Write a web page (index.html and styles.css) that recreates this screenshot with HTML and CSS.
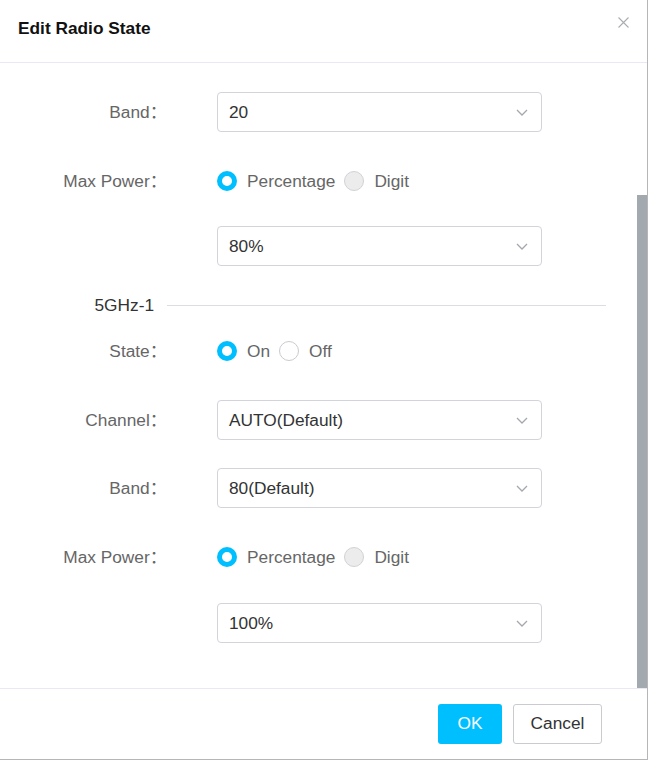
FILE: index.html
```html
<!DOCTYPE html>
<html>
<head>
<meta charset="utf-8">
<link rel="stylesheet" href="styles.css">
</head>
<body>
<div class="dialog">
  <div class="header">
    <div class="title">Edit Radio State</div>
    <svg class="close" width="11" height="11" viewBox="0 0 11 11"><path d="M0.5 0.5 L10.5 10.5 M10.5 0.5 L0.5 10.5" stroke="#a9adb3" stroke-width="1.1" fill="none"/></svg>
  </div>
  <div class="body">
    <div class="row first">
      <div class="label">Band：</div>
      <div class="select"><span>20</span><svg class="chev" width="12" height="7" viewBox="0 0 12 7"><path d="M1 1 L6 6 L11 1" stroke="#a4a7ad" stroke-width="1.3" fill="none"/></svg></div>
    </div>
    <div class="row gap29">
      <div class="label">Max Power：</div>
      <div class="radios">
        <span class="opt"><span class="radio on"></span>Percentage</span>
        <span class="opt"><span class="radio off gray"></span>Digit</span>
      </div>
    </div>
    <div class="row gap25">
      <div class="label"></div>
      <div class="select"><span>80%</span><svg class="chev" width="12" height="7" viewBox="0 0 12 7"><path d="M1 1 L6 6 L11 1" stroke="#a4a7ad" stroke-width="1.3" fill="none"/></svg></div>
    </div>
    <div class="section">
      <div class="sec-title">5GHz-1</div>
      <div class="sec-line"></div>
    </div>
    <div class="row gap16">
      <div class="label">State：</div>
      <div class="radios">
        <span class="opt"><span class="radio on"></span>On</span>
        <span class="opt"><span class="radio off"></span>Off</span>
      </div>
    </div>
    <div class="row gap29">
      <div class="label">Channel：</div>
      <div class="select"><span>AUTO(Default)</span><svg class="chev" width="12" height="7" viewBox="0 0 12 7"><path d="M1 1 L6 6 L11 1" stroke="#a4a7ad" stroke-width="1.3" fill="none"/></svg></div>
    </div>
    <div class="row gap28">
      <div class="label">Band：</div>
      <div class="select"><span>80(Default)</span><svg class="chev" width="12" height="7" viewBox="0 0 12 7"><path d="M1 1 L6 6 L11 1" stroke="#a4a7ad" stroke-width="1.3" fill="none"/></svg></div>
    </div>
    <div class="row gap29">
      <div class="label">Max Power：</div>
      <div class="radios">
        <span class="opt"><span class="radio on"></span>Percentage</span>
        <span class="opt"><span class="radio off gray"></span>Digit</span>
      </div>
    </div>
    <div class="row gap26">
      <div class="label"></div>
      <div class="select"><span>100%</span><svg class="chev" width="12" height="7" viewBox="0 0 12 7"><path d="M1 1 L6 6 L11 1" stroke="#a4a7ad" stroke-width="1.3" fill="none"/></svg></div>
    </div>
    <div class="thumb"></div>
  </div>
  <div class="footer">
    <button class="btn ok">OK</button>
    <button class="btn cancel">Cancel</button>
  </div>
</div>
</body>
</html>
```

FILE: styles.css
```css
html, body {
  margin: 0;
  padding: 0;
  background: #ffffff;
}
body {
  font-family: "Liberation Sans", Arial, "Noto Sans CJK SC", sans-serif;
  font-size: 17.3px;
  line-height: 20px;
  color: #666;
}
.dialog {
  width: 647px;
  height: 759px;
  border-right: 1px solid #b4b6b9;
  border-bottom: 1px solid #b4b6b9;
  display: flex;
  flex-direction: column;
  background: #fff;
}
.header {
  height: 62px;
  border-bottom: 1px solid #e9e8f6;
  display: flex;
  align-items: center;
  justify-content: space-between;
  padding: 0 18px;
  position: relative;
}
.title {
  font-weight: bold;
  color: #111;
  font-size: 17.3px;
  margin-top: -6px;
}
.close {
  position: absolute;
  right: 18px;
  top: 17px;
}
.body {
  height: 625px;
  position: relative;
  overflow: hidden;
  padding-top: 29px;
  box-sizing: border-box;
}
.row {
  display: flex;
  align-items: center;
  height: 40px;
}
.gap29 { margin-top: 29px; }
.gap28 { margin-top: 28px; }
.gap26 { margin-top: 26px; }
.gap25 { margin-top: 25px; }
.gap16 { margin-top: 16px; }
.label {
  width: 167px;
  height: 20px;
  text-align: right;
  flex: none;
  color: #666;
  margin-top: -1px;
}
.select {
  margin-left: 50px;
  width: 325px;
  height: 40px;
  box-sizing: border-box;
  border: 1px solid #d3d3db;
  border-radius: 4px;
  display: flex;
  align-items: center;
  justify-content: space-between;
  padding: 0 13px 0 11px;
  color: #333;
}
.chev {
  display: block;
}
.radios {
  margin-left: 50px;
  display: flex;
  align-items: center;
  gap: 9px;
}
.opt {
  display: flex;
  align-items: center;
  gap: 10px;
  color: #666;
}
.radio {
  width: 20px;
  height: 20px;
  box-sizing: border-box;
  border-radius: 50%;
  display: inline-block;
  flex: none;
}
.radio.on {
  border: 5.5px solid #00bfff;
  background: #fff;
}
.radio.off {
  border: 1px solid #c9cbd0;
  background: #fff;
}
.radio.off.gray {
  background: #ececec;
  border-color: #d0d2d6;
}
.section {
  margin-top: 29px;
  height: 20px;
  display: flex;
  align-items: center;
}
.sec-title {
  width: 154px;
  text-align: right;
  color: #333;
  flex: none;
}
.sec-line {
  margin-left: 13px;
  width: 439px;
  height: 1px;
  background: #dcdde2;
}
.thumb {
  position: absolute;
  right: 0;
  top: 132px;
  width: 10px;
  bottom: 0;
  background: #a2aab0;
}
.footer {
  flex: 1;
  border-top: 1px solid #e9e8f6;
  display: flex;
  align-items: center;
  justify-content: flex-end;
  padding-right: 45px;
  gap: 11px;
}
.btn {
  height: 40px;
  border-radius: 3px;
  font-family: "Liberation Sans", Arial, sans-serif;
  font-size: 17.3px;
  padding: 0;
  margin-top: -1px;
}
.ok {
  width: 64px;
  background: #00bfff;
  color: #fff;
  border: none;
}
.cancel {
  width: 89px;
  background: #fff;
  color: #333;
  border: 1px solid #c9cbd0;
}
```
